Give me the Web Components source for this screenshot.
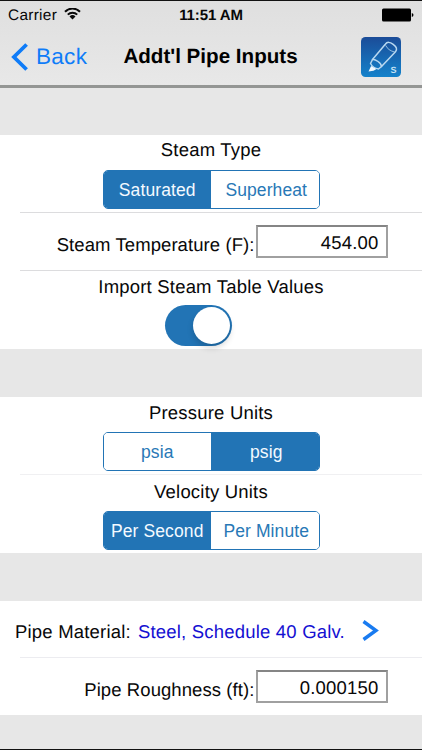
<!DOCTYPE html>
<html lang="en">
<head>
<meta charset="utf-8">
<title>Addt'l Pipe Inputs</title>
<style>
    body{
        margin: 0;
        width: 422px;
        height: 750px;
        overflow: hidden;
        background-color: #e7e7e7;
        font-family: 'Liberation Sans', Arial, sans-serif;
        font-size: 18.5px;
        color: #080808;
        text-rendering: geometricPrecision;
    }
</style>
</head>
<body>
<pipe-screen>
    <status-bar slot="top" carrier="Carrier" time="11:51 AM"></status-bar>
    <nav-bar slot="top" back="Back">Addt'l Pipe Inputs</nav-bar>

    <form-section style="--height: 214px">
        <stack-row label="Steam Type" style="--height: 77px; --gap: 5px">
            <segment-control options="Saturated,Superheat" selected="0"></segment-control>
        </stack-row>
        <field-row label="Steam Temperature (F):" value="454.00" style="--height: 57px; --top: 12px"></field-row>
        <stack-row label="Import Steam Table Values" style="--height: 78px; --pad: 1px; --gap: 3px">
            <toggle-switch></toggle-switch>
        </stack-row>
    </form-section>

    <form-section style="--height: 156px">
        <stack-row label="Pressure Units" style="--height: 77px; --pad: 1px; --gap: 4px; --line: #f0f0f2">
            <segment-control options="psia,psig" selected="1"></segment-control>
        </stack-row>
        <stack-row label="Velocity Units" style="--height: 77px; --pad: 2px; --gap: 4px">
            <segment-control options="Per Second,Per Minute" selected="0"></segment-control>
        </stack-row>
    </form-section>

    <form-section style="--height: 114px">
        <link-row label="Pipe Material:">Steel, Schedule 40 Galv.</link-row>
        <field-row label="Pipe Roughness (ft):" value="0.000150" style="--height: 56px; --top: 12px"></field-row>
    </form-section>
</pipe-screen>

<script>
class PipeScreen extends HTMLElement {

    constructor() {
        super();
        this.shadow = this.attachShadow({ mode: 'open' });
    }

    connectedCallback() {
        this.shadow.innerHTML =
        `
        <style>
            :host{
                display: flex;
                flex-direction: column;
                box-sizing: border-box;
                height: 750px;
                border-top: 1px solid #111;
                border-bottom: 1px solid #111;
            }
            header{
                box-sizing: border-box;
                height: 87px;
                flex: none;
                background: linear-gradient(#dfdfdf, #e8e8e8);
                border-bottom: 3px solid #949694;
            }
            main{
                display: flex;
                flex-direction: column;
                gap: 48px;
                padding-top: 47px;
            }
        </style>
        <header><slot name="top"></slot></header>
        <main><slot></slot></main>`;
    }
}
customElements.define('pipe-screen', PipeScreen);

class StatusBar extends HTMLElement {

    constructor() {
        super();
        this.shadow = this.attachShadow({ mode: 'open' });
    }

    connectedCallback() {
        this.shadow.innerHTML =
        `
        <style>
            :host{
                display: grid;
                grid-template-columns: 1fr auto 1fr;
                align-items: center;
                height: 28px;
                padding: 0 8px;
                font-size: 15.4px;
            }
            .left{
                display: flex;
                align-items: center;
                gap: 7px;
                letter-spacing: 0.3px;
            }
            .left span{
                padding-top: 2px;
            }
            .time{
                font-weight: bold;
                font-size: 15px;
                letter-spacing: -0.1px;
            }
            .battery{
                justify-self: end;
            }
            svg{
                display: block;
            }
        </style>
        <div class="left">
            <span>${this.getAttribute('carrier')}</span>
            <svg width="17" height="14" viewBox="0 1 17 14" fill="none" stroke="#080808" stroke-width="2">
                <path d="M1 4.700a10.600 10.600 0 0 1 15 0M3.800 7.600a6.600 6.600 0 0 1 9.400 0"/>
                <path d="M8.500 12.400L5.500 9.500a4.300 4.300 0 0 1 6 0z" fill="#080808" stroke="none"/>
            </svg>
        </div>
        <span class="time">${this.getAttribute('time')}</span>
        <svg class="battery" width="33" height="14" viewBox="0 0 33 14">
            <rect x="1" y="0.5" width="29" height="13" rx="1.5"/>
            <path d="M30.800 5v4q1.700-.5 1.700-2t-1.700-2z"/>
        </svg>`;
    }
}
customElements.define('status-bar', StatusBar);

class NavBar extends HTMLElement {

    constructor() {
        super();
        this.shadow = this.attachShadow({ mode: 'open' });
    }

    connectedCallback() {
        this.shadow.innerHTML =
        `
        <style>
            :host{
                display: grid;
                grid-template-columns: 1fr auto 1fr;
                align-items: center;
                height: 56px;
                padding: 0 21px 0 11px;
            }
            .back{
                display: flex;
                align-items: center;
                gap: 7px;
                color: #0f7cf8;
                font-size: 22.5px;
                letter-spacing: 0.3px;
            }
            h1{
                margin: 0;
                padding-left: 9px;
                font-size: 20.6px;
                color: #000;
            }
            .logo{
                justify-self: end;
            }
            svg{
                display: block;
            }
        </style>
        <div class="back">
            <svg width="18" height="28" viewBox="0 0 18 28" fill="none" stroke="#0f7cf8" stroke-width="3.8">
                <path d="M15.600 1.500L2.900 14l12.700 12.500"/>
            </svg>
            <span>${this.getAttribute('back')}</span>
        </div>
        <h1><slot></slot></h1>
        <svg class="logo" width="40" height="40" viewBox="0 0 40 40">
            <defs>
                <linearGradient id="blue" x1="0" y1="0" x2="0" y2="1">
                    <stop offset="0" stop-color="#1b4c98"/>
                    <stop offset="1" stop-color="#1482cb"/>
                </linearGradient>
            </defs>
            <rect width="40" height="40" rx="4.500" fill="url(#blue)"/>
            <g fill="none" stroke="#b9d8f0" stroke-width="1.500" stroke-linejoin="round" stroke-linecap="round">
                <path d="M11.500 22.500L24.300 7.200Q27 3.500 32.200 7.300T34.500 14.800L20.500 29.500"/>
                <path d="M24.800 8.700Q27 13.500 33.500 15" stroke-width="0.800"/>
                <path d="M11.500 22.500Q13.500 22 17 24.500T20.500 29.500L17.500 32Q12 31 9.500 26.500z"/>
            </g>
            <path d="M7.500 34.500l2.600-5.500 5.400 3-3 1.700z" fill="#f0f8ff"/>
            <text x="29.500" y="36" font-family="Liberation Sans" font-weight="bold" font-size="9" fill="#c4e2f4">S</text>
        </svg>`;
    }
}
customElements.define('nav-bar', NavBar);

class FormSection extends HTMLElement {

    constructor() {
        super();
        this.shadow = this.attachShadow({ mode: 'open' });
    }

    connectedCallback() {
        this.shadow.innerHTML =
        `
        <style>
            :host{
                display: flex;
                flex-direction: column;
                height: var(--height);
                background-color: white;
            }
            ::slotted(:not(:last-child)){
                border-bottom: 1px solid var(--line, #dcdcde);
                border-image: linear-gradient(to right, transparent 20px, var(--line, #dcdcde) 20px) 0 0 1 0;
            }
        </style>
        <slot></slot>`;
    }
}
customElements.define('form-section', FormSection);

// centered label with a control below it
class StackRow extends HTMLElement {

    constructor() {
        super();
        this.shadow = this.attachShadow({ mode: 'open' });
    }

    connectedCallback() {
        this.shadow.innerHTML =
        `
        <style>
            :host{
                display: flex;
                flex-direction: column;
                align-items: center;
                gap: var(--gap);
                height: calc(var(--height) - var(--pad, 0px));
                padding-top: var(--pad, 0px);
            }
            label{
                line-height: 30px;
                letter-spacing: 0.2px;
            }
        </style>
        <label>${this.getAttribute('label')}</label>
        <slot></slot>`;
    }
}
customElements.define('stack-row', StackRow);

class SegmentControl extends HTMLElement {

    constructor() {
        super();
        this.shadow = this.attachShadow({ mode: 'open' });
        this.selected = 0;
    }

    connectedCallback() {
        this.selected = Number(this.getAttribute('selected'));
        this.render();
    }

    render() {
        let options = this.getAttribute('options').split(',');

        this.shadow.innerHTML =
        `
        <style>
            :host{
                display: grid;
                grid-template-columns: 1fr 1fr;
                box-sizing: border-box;
                width: 217px;
                height: 39px;
                border: 1px solid #2274b5;
                border-radius: 5px;
                overflow: hidden;
            }
            button{
                border: 0;
                padding: 1px 0 0;
                background-color: white;
                color: #2878b6;
                font-family: inherit;
                font-size: 17.5px;
                letter-spacing: 0.1px;
            }
            button:last-child{
                padding-left: 3px;
            }
            button.active{
                background-color: #2274b5;
                color: #f4faff;
            }
        </style>
        ${options.map((name, i) => `<button class="${i == this.selected ? 'active' : ''}">${name}</button>`).join('')}`;

        this.shadow.querySelectorAll('button').forEach((button, i) => {
            button.addEventListener('click', () => {
                this.selected = i;
                this.render();
            });
        });
    }
}
customElements.define('segment-control', SegmentControl);

class ToggleSwitch extends HTMLElement {

    constructor() {
        super();
        this.shadow = this.attachShadow({ mode: 'open' });
    }

    connectedCallback() {
        this.shadow.innerHTML =
        `
        <style>
            :host{
                display: flex;
                justify-content: flex-end;
                box-sizing: border-box;
                width: 67px;
                height: 41px;
                margin-right: 25px;
                padding: 2px;
                border-radius: 21px;
                background-color: #2274b5;
            }
            div{
                width: 37px;
                height: 37px;
                border-radius: 50%;
                background-color: white;
                box-shadow: 0 4px 6px rgba(0, 0, 0, 0.16);
            }
        </style>
        <div></div>`;
    }
}
customElements.define('toggle-switch', ToggleSwitch);

class FieldRow extends HTMLElement {

    constructor() {
        super();
        this.shadow = this.attachShadow({ mode: 'open' });
    }

    connectedCallback() {
        this.shadow.innerHTML =
        `
        <style>
            :host{
                display: grid;
                grid-template-columns: 254.500px 132px;
                gap: 1px;
                align-items: start;
                height: var(--height);
            }
            label{
                padding-top: calc(var(--top) + 5px);
                line-height: 30px;
                text-align: right;
                white-space: nowrap;
                letter-spacing: 0.08px;
            }
            .value{
                box-sizing: border-box;
                height: 33px;
                margin-top: var(--top);
                padding-right: 7px;
                border: 2px solid #a0a0a0;
                border-top-color: #858585;
                line-height: 31px;
                text-align: right;
                letter-spacing: 0.2px;
            }
        </style>
        <label>${this.getAttribute('label')}</label>
        <div class="value">${this.getAttribute('value')}</div>`;
    }
}
customElements.define('field-row', FieldRow);

class LinkRow extends HTMLElement {

    constructor() {
        super();
        this.shadow = this.attachShadow({ mode: 'open' });
    }

    connectedCallback() {
        this.shadow.innerHTML =
        `
        <style>
            :host{
                --line: #ececf0;
                display: flex;
                align-items: center;
                height: 56px;
                padding: 0 43px 0 15px;
                white-space: nowrap;
                letter-spacing: 0.2px;
            }
            span, a{
                padding-top: 6px;
            }
            a{
                margin-left: 7px;
                color: #1410d2;
            }
            svg{
                margin-left: auto;
                padding-top: 3px;
            }
        </style>
        <span>${this.getAttribute('label')}</span>
        <a><slot></slot></a>
        <svg width="17" height="21" viewBox="0 0 17 21" fill="none" stroke="#197bf0" stroke-width="3.4">
            <path d="M1.500 1.500L14 10.500L1.500 19.500"/>
        </svg>`;
    }
}
customElements.define('link-row', LinkRow);
</script>
</body>
</html>
